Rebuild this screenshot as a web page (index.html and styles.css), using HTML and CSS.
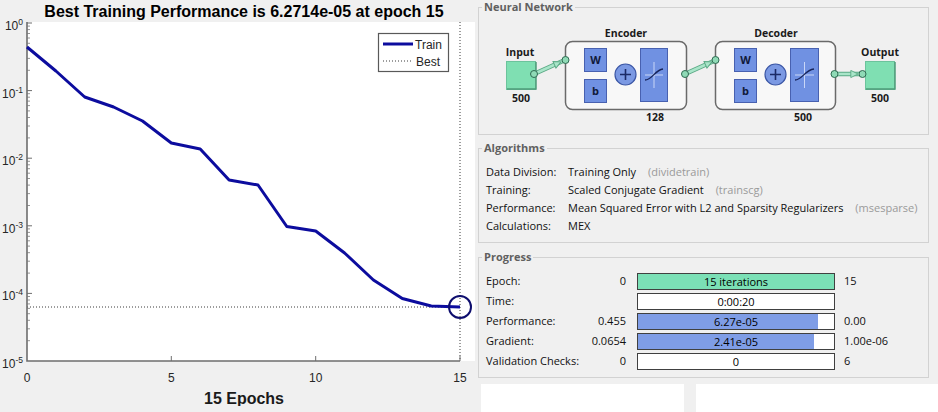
FILE: index.html
```html
<!DOCTYPE html>
<html>
<head>
<meta charset="utf-8">
<link rel="stylesheet" href="styles.css">
</head>
<body>
<div class="window">
  <div class="figure">
    <svg class="plot" width="476" height="406" viewBox="0 0 476 406">
      <rect class="axes-bg" x="27" y="22" width="448" height="339"/>
      <text class="title" x="244" y="17" text-anchor="middle">Best Training Performance is 6.2714e-05 at epoch 15</text>
      <!-- best lines -->
      <line class="best" x1="460" y1="22" x2="460" y2="361"/>
      <line class="best" x1="27" y1="307" x2="460" y2="307"/>
      <!-- axes -->
      <path class="axis" d="M27,22 V361 H460"/>
      <path class="tick" d="M27,23 h5 M27,90.6 h5 M27,158.2 h5 M27,225.8 h5 M27,293.4 h5
        M171.3,361 v-5 M315.7,361 v-5 M460,361 v-5"/>
      <path class="minor" d="M27,26.1h3M27,29.6h3M27,33.5h3M27,38h3M27,43.3h3M27,49.9h3M27,58.4h3M27,70.3h3
        M27,93.7h3M27,97.2h3M27,101.1h3M27,105.6h3M27,110.9h3M27,117.5h3M27,126h3M27,137.9h3
        M27,161.3h3M27,164.8h3M27,168.7h3M27,173.2h3M27,178.5h3M27,185.1h3M27,193.6h3M27,205.5h3
        M27,228.9h3M27,232.4h3M27,236.3h3M27,240.8h3M27,246.1h3M27,252.7h3M27,261.2h3M27,273.1h3
        M27,296.5h3M27,300h3M27,303.9h3M27,308.4h3M27,313.7h3M27,320.3h3M27,328.8h3M27,340.7h3"/>
      <!-- y labels -->
      <text class="tl" x="23" y="30" text-anchor="end">10<tspan class="sup" dy="-5">0</tspan></text>
      <text class="tl" x="23" y="97.6" text-anchor="end">10<tspan class="sup" dy="-5">-1</tspan></text>
      <text class="tl" x="23" y="165.2" text-anchor="end">10<tspan class="sup" dy="-5">-2</tspan></text>
      <text class="tl" x="23" y="232.8" text-anchor="end">10<tspan class="sup" dy="-5">-3</tspan></text>
      <text class="tl" x="23" y="300.4" text-anchor="end">10<tspan class="sup" dy="-5">-4</tspan></text>
      <text class="tl" x="23" y="368" text-anchor="end">10<tspan class="sup" dy="-5">-5</tspan></text>
      <!-- x labels -->
      <text class="tl" x="27" y="382" text-anchor="middle">0</text>
      <text class="tl" x="171.3" y="382" text-anchor="middle">5</text>
      <text class="tl" x="315.7" y="382" text-anchor="middle">10</text>
      <text class="tl" x="460" y="382" text-anchor="middle">15</text>
      <text class="xlabel" x="244" y="404" text-anchor="middle">15 Epochs</text>
      <!-- data -->
      <polyline class="train" points="27,47 55.9,71 84.7,97 113.6,107 142.5,121 171.3,143 200.2,149 229.1,180 258,185 286.8,226.5 315.7,231 344.6,253 373.4,280 402.3,298.5 431.2,306 460,307"/>
      <circle class="bestmark" cx="460" cy="307" r="11"/>
      <!-- legend -->
      <rect class="legend" x="378.5" y="33.5" width="70" height="38"/>
      <line class="train" x1="383" y1="44" x2="413" y2="44"/>
      <line class="best" x1="383" y1="61" x2="413" y2="61"/>
      <text class="tl" x="415" y="48.5">Train</text>
      <text class="tl" x="416" y="65.5">Best</text>
    </svg>
  </div>
  <div class="side">
    <fieldset class="panel nn">
      <legend>Neural Network</legend>
      <svg class="diagram" width="449" height="120" viewBox="479 14 449 120">
        <defs>
          <marker id="ah" viewBox="0 0 10 10" refX="9" refY="5" markerUnits="userSpaceOnUse" markerWidth="9" markerHeight="9" orient="auto">
            <path d="M1,1 L9,5 L1,9 Z" fill="#a9e5c9" stroke="#5aa985" stroke-width="1"/>
          </marker>
        </defs>
        <!-- connections -->
        <g class="conn">
          <path d="M534,74 L565,60"/>
          <path d="M565,60 L584,60"/>
          <path d="M607,60 C614,60 616,63 618,67"/>
          <path d="M607,91 C614,91 616,86 618,81"/>
          <path d="M636,74 L640,74"/>
          <path d="M667,74 L685,74"/>
          <path d="M685,74 L716,60"/>
          <path d="M716,60 L734,60"/>
          <path d="M757,60 C764,60 766,63 768,67"/>
          <path d="M757,91 C764,91 766,86 768,81"/>
          <path d="M786,74 L790,74"/>
          <path d="M819,74 L834,74"/>
          <path d="M834,74 L862,74"/>
        </g>
        <g class="conn-in">
          <path d="M534,74 L565,60"/>
          <path d="M565,60 L584,60"/>
          <path d="M607,60 C614,60 616,63 618,67"/>
          <path d="M607,91 C614,91 616,86 618,81"/>
          <path d="M636,74 L640,74"/>
          <path d="M667,74 L685,74"/>
          <path d="M685,74 L716,60"/>
          <path d="M716,60 L734,60"/>
          <path d="M757,60 C764,60 766,63 768,67"/>
          <path d="M757,91 C764,91 766,86 768,81"/>
          <path d="M786,74 L790,74"/>
          <path d="M819,74 L834,74"/>
          <path d="M834,74 L862,74"/>
        </g>
        <g class="arrows">
          <path d="M540,71.3 L561,61.8" marker-end="url(#ah)"/>
          <path d="M668,74 L681,74" marker-end="url(#ah)"/>
          <path d="M691,71.3 L712,61.8" marker-end="url(#ah)"/>
          <path d="M820,74 L830,74" marker-end="url(#ah)"/>
          <path d="M840,74 L858,74" marker-end="url(#ah)"/>
        </g>
        <!-- input -->
        <text class="dl" x="520" y="55.5" text-anchor="middle">Input</text>
        <rect class="io" x="506.5" y="61.5" width="29" height="28"/>
        <path class="io-edge" d="M507,89 H536 V62"/>
        <text class="dl" x="521" y="102" text-anchor="middle">500</text>
        <!-- encoder -->
        <text class="dl" x="626" y="36.5" text-anchor="middle">Encoder</text>
        <rect class="layer" x="565.5" y="41.5" width="121" height="68" rx="7"/>
        <rect class="blk" x="584.5" y="48.5" width="22" height="23"/>
        <text class="bl" x="595.5" y="64">W</text>
        <rect class="blk" x="584.5" y="79.5" width="22" height="23"/>
        <text class="bl" x="595.5" y="95">b</text>
        <circle class="sum" cx="625.5" cy="74.5" r="10.5"/>
        <path class="plus" d="M620,74.5 h11 M625.5,69 v11"/>
        <rect class="blk" x="640.5" y="48.5" width="27" height="53"/>
        <path class="grid" d="M654,62 V88 M645,75 H663"/>
        <path class="sig" d="M645,80 C652,80 655,70 663,69"/>
        <text class="dl" x="655" y="121" text-anchor="middle">128</text>
        <!-- decoder -->
        <text class="dl" x="776" y="36.5" text-anchor="middle">Decoder</text>
        <rect class="layer" x="715.5" y="41.5" width="120" height="68" rx="7"/>
        <rect class="blk" x="734.5" y="48.5" width="22" height="23"/>
        <text class="bl" x="745.5" y="64">W</text>
        <rect class="blk" x="734.5" y="79.5" width="22" height="23"/>
        <text class="bl" x="745.5" y="95">b</text>
        <circle class="sum" cx="775.5" cy="74.5" r="10.5"/>
        <path class="plus" d="M770,74.5 h11 M775.5,69 v11"/>
        <rect class="blk" x="790.5" y="48.5" width="28" height="53"/>
        <path class="grid" d="M804.5,62 V88 M795,75 H814"/>
        <path class="sig" d="M795,80 C802,80 805,70 814,69"/>
        <text class="dl" x="803" y="121" text-anchor="middle">500</text>
        <!-- output -->
        <text class="dl" x="880" y="55.5" text-anchor="middle">Output</text>
        <rect class="io" x="865.5" y="61.5" width="29" height="28"/>
        <path class="io-edge" d="M866,89 H895 V62"/>
        <text class="dl" x="880" y="102" text-anchor="middle">500</text>
        <!-- nodes -->
        <g class="node">
          <circle cx="534" cy="74" r="3.5"/>
          <circle cx="565.5" cy="60" r="3.5"/>
          <circle cx="685" cy="74" r="3.5"/>
          <circle cx="715.5" cy="60" r="3.5"/>
          <circle cx="834.5" cy="74" r="3.5"/>
          <circle cx="862.5" cy="74" r="3.5"/>
        </g>
      </svg>
    </fieldset>

    <fieldset class="panel algo">
      <legend>Algorithms</legend>
      <div class="algo-body">
        <div class="k">Data Division:</div><div class="v">Training Only <span class="fn">(dividetrain)</span></div>
        <div class="k">Training:</div><div class="v">Scaled Conjugate Gradient <span class="fn">(trainscg)</span></div>
        <div class="k">Performance:</div><div class="v">Mean Squared Error with L2 and Sparsity Regularizers <span class="fn">(msesparse)</span></div>
        <div class="k">Calculations:</div><div class="v">MEX</div>
      </div>
    </fieldset>

    <fieldset class="panel prog">
      <legend>Progress</legend>
      <div class="prog-body">
        <div class="k">Epoch:</div><div class="lo">0</div>
        <div class="bar"><div class="fill green" style="width:100%"></div><span class="bt">15 iterations</span></div>
        <div class="hi">15</div>

        <div class="k">Time:</div><div class="lo"></div>
        <div class="bar"><div class="fill" style="width:0%"></div><span class="bt">0:00:20</span></div>
        <div class="hi"></div>

        <div class="k">Performance:</div><div class="lo">0.455</div>
        <div class="bar"><div class="fill blue" style="width:92%"></div><span class="bt">6.27e-05</span></div>
        <div class="hi">0.00</div>

        <div class="k">Gradient:</div><div class="lo">0.0654</div>
        <div class="bar"><div class="fill blue" style="width:90%"></div><span class="bt">2.41e-05</span></div>
        <div class="hi">1.00e-06</div>

        <div class="k">Validation Checks:</div><div class="lo">0</div>
        <div class="bar"><div class="fill" style="width:0%"></div><span class="bt">0</span></div>
        <div class="hi">6</div>
      </div>
    </fieldset>

    <div class="buttons">
      <div class="btnbox first"></div>
      <div class="btnbox second"></div>
    </div>
  </div>
</div>
</body>
</html>
```

FILE: styles.css
```css
html, body {
  margin: 0;
  padding: 0;
  background: #f0f0f0;
}
.window {
  display: flex;
  width: 938px;
  height: 412px;
  overflow: hidden;
  background: #f0f0f0;
  font-family: "Open Sans", "Noto Sans", sans-serif;
}
.figure {
  width: 476px;
  flex: none;
}
.plot {
  display: block;
}
.axes-bg { fill: #ffffff; }
.title {
  font: bold 16px "Liberation Sans", Arial, sans-serif;
  fill: #000;
}
.xlabel {
  font: bold 16px "Liberation Sans", Arial, sans-serif;
  fill: #1a1a1a;
}
.tl {
  font: 12px "Liberation Sans", Arial, sans-serif;
  fill: #262626;
}
.sup { font-size: 8.5px; }
.axis { fill: none; stroke: #6e6e6e; stroke-width: 1.6; }
.tick { fill: none; stroke: #6e6e6e; stroke-width: 1; }
.minor { fill: none; stroke: #7a7a7a; stroke-width: 0.8; }
.best { stroke: #3a3a3a; stroke-width: 1; stroke-dasharray: 1 2; }
.train { fill: none; stroke: #0c0c9e; stroke-width: 3; stroke-linejoin: round; }
.bestmark { fill: none; stroke: #0e0e6e; stroke-width: 2; }
.legend { fill: #fff; stroke: #595959; stroke-width: 1.2; }

.side {
  flex: 1;
  display: flex;
  flex-direction: column;
  padding: 0 9px 0 2px;
  min-width: 0;
}
.panel {
  margin: 0;
  padding: 0;
  border: 1px solid #d2d2d2;
  min-width: 0;
}
.panel legend {
  margin-left: 3px;
  padding: 0 2px;
  font: bold 11px "Open Sans", sans-serif;
  line-height: 14px;
  color: #606060;
}
.nn { height: 135px; box-sizing: border-box; }
.diagram { display: block; }
.conn path { fill: none; stroke: #5aa985; stroke-width: 4.5; stroke-linecap: butt; }
.conn-in path { fill: none; stroke: #a9e5c9; stroke-width: 2.5; }
.arrows path { fill: none; stroke: none; }
.io { fill: #7fdfb2; stroke: #6cc39c; stroke-width: 1; }
.io-edge { fill: none; stroke: #4f9c7a; stroke-width: 1.5; }
.layer { fill: #f8f8f8; stroke: #6a6a6a; stroke-width: 1.5; }
.blk { fill: #7091e2; stroke: #4861b0; stroke-width: 1; }
.sum { fill: #7b99e3; stroke: #3c57a6; stroke-width: 1.2; }
.plus { stroke: #1b2a66; stroke-width: 1.6; fill: none; }
.grid { stroke: #c9d6f7; stroke-width: 1; fill: none; }
.sig { stroke: #17245a; stroke-width: 1.3; fill: none; }
.node circle { fill: #8fdab6; stroke: #2f6b52; stroke-width: 1; }
.dl { font: bold 10.5px "Open Sans", sans-serif; fill: #1a1a1a; }
.bl { font: bold 11px "Open Sans", sans-serif; fill: #111a3a; text-anchor: middle; }

.algo { margin-top: 6px; }
.algo-body {
  display: grid;
  grid-template-columns: 82px 1fr;
  grid-auto-rows: 18px;
  padding: 8px 7px 7px;
  font-size: 11px;
  line-height: 18px;
  color: #111;
  white-space: nowrap;
}
.fn { color: #9a9a9a; margin-left: 9px; }

.prog { margin-top: 7px; }
.prog-body {
  display: grid;
  grid-template-columns: 90px 61px 198px 1fr;
  grid-auto-rows: 20px;
  padding: 7px 7px 6px;
  font-size: 11px;
  line-height: 20px;
  color: #111;
  white-space: nowrap;
}
.lo { text-align: right; padding-right: 11px; }
.hi { padding-left: 9px; }
.bar {
  display: grid;
  margin-top: 2px;
  height: 17px;
  box-sizing: border-box;
  border: 1px solid #404040;
  background: #fff;
}
.bar > * { grid-area: 1 / 1; }
.fill { height: 100%; }
.fill.green { background: #7be0b6; }
.fill.blue { background: #7f9de6; }
.bt {
  text-align: center;
  line-height: 15px;
  font-size: 11px;
  color: #000;
}

.buttons {
  display: flex;
  gap: 12px;
  margin: 6px -9px 0 3px;
  flex: 1;
}
.btnbox { background: #fff; }
.btnbox.first { width: 203px; }
.btnbox.second { flex: 1; }
```
